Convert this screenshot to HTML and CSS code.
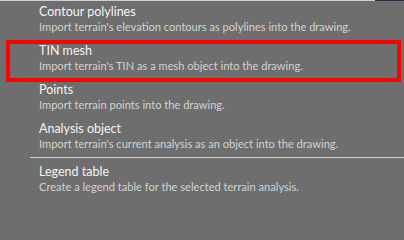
FILE: index.html
```html
<!DOCTYPE html>
<html>
<head>
<meta charset="utf-8">
<link rel="stylesheet" href="styles.css">
</head>
<body>
<div class="edge edge-top"><span class="edge-light"></span><span class="edge-dark"></span></div>
<div class="menu">
  <div class="item">
    <div class="title">Contour polylines</div>
    <div class="desc">Import terrain's elevation contours as polylines into the drawing.</div>
  </div>
  <div class="item selected">
    <div class="title">TIN mesh</div>
    <div class="desc">Import terrain's TIN as a mesh object into the drawing.</div>
  </div>
  <div class="item">
    <div class="title">Points</div>
    <div class="desc">Import terrain points into the drawing.</div>
  </div>
  <div class="item">
    <div class="title">Analysis object</div>
    <div class="desc">Import terrain's current analysis as an object into the drawing.</div>
  </div>
  <div class="sep"></div>
  <div class="item">
    <div class="title">Legend table</div>
    <div class="desc">Create a legend table for the selected terrain analysis.</div>
  </div>
</div>
<div class="edge edge-bottom"><span class="edge-light"></span><span class="edge-dark"></span></div>
</body>
</html>
```

FILE: styles.css
```css
html, body {
  margin: 0;
  padding: 0;
  background: #6e6e6e;
  width: 404px;
  height: 200px;
  overflow: hidden;
}

body {
  display: flex;
  flex-direction: column;
  font-family: "Lato", "Open Sans", sans-serif;
}

.edge {
  display: flex;
  height: 1px;
  flex: none;
}

.edge-light {
  width: 375px;
  background: #cfcfcf;
}

.edge-dark {
  flex: 1;
  background: #2a3442;
}

.menu {
  flex: 1;
  display: flex;
  flex-direction: column;
}

.item {
  position: relative;
  height: 39px;
  flex: none;
  box-sizing: border-box;
  padding: 3px 0 0 39px;
}

.item.selected::before {
  content: "";
  position: absolute;
  left: 6px;
  right: 3px;
  top: 0;
  bottom: -3px;
  border: 4px solid #ff0000;
}

.title {
  font-size: 12.5px;
  line-height: 15px;
  color: #f4f4f4;
  white-space: nowrap;
}

.desc {
  font-size: 11.1px;
  line-height: 15px;
  color: #d2d2d2;
  white-space: nowrap;
}

.sep {
  height: 1px;
  flex: none;
  margin: 0 0 3px 30px;
  background: #d0d0d0;
}
```
